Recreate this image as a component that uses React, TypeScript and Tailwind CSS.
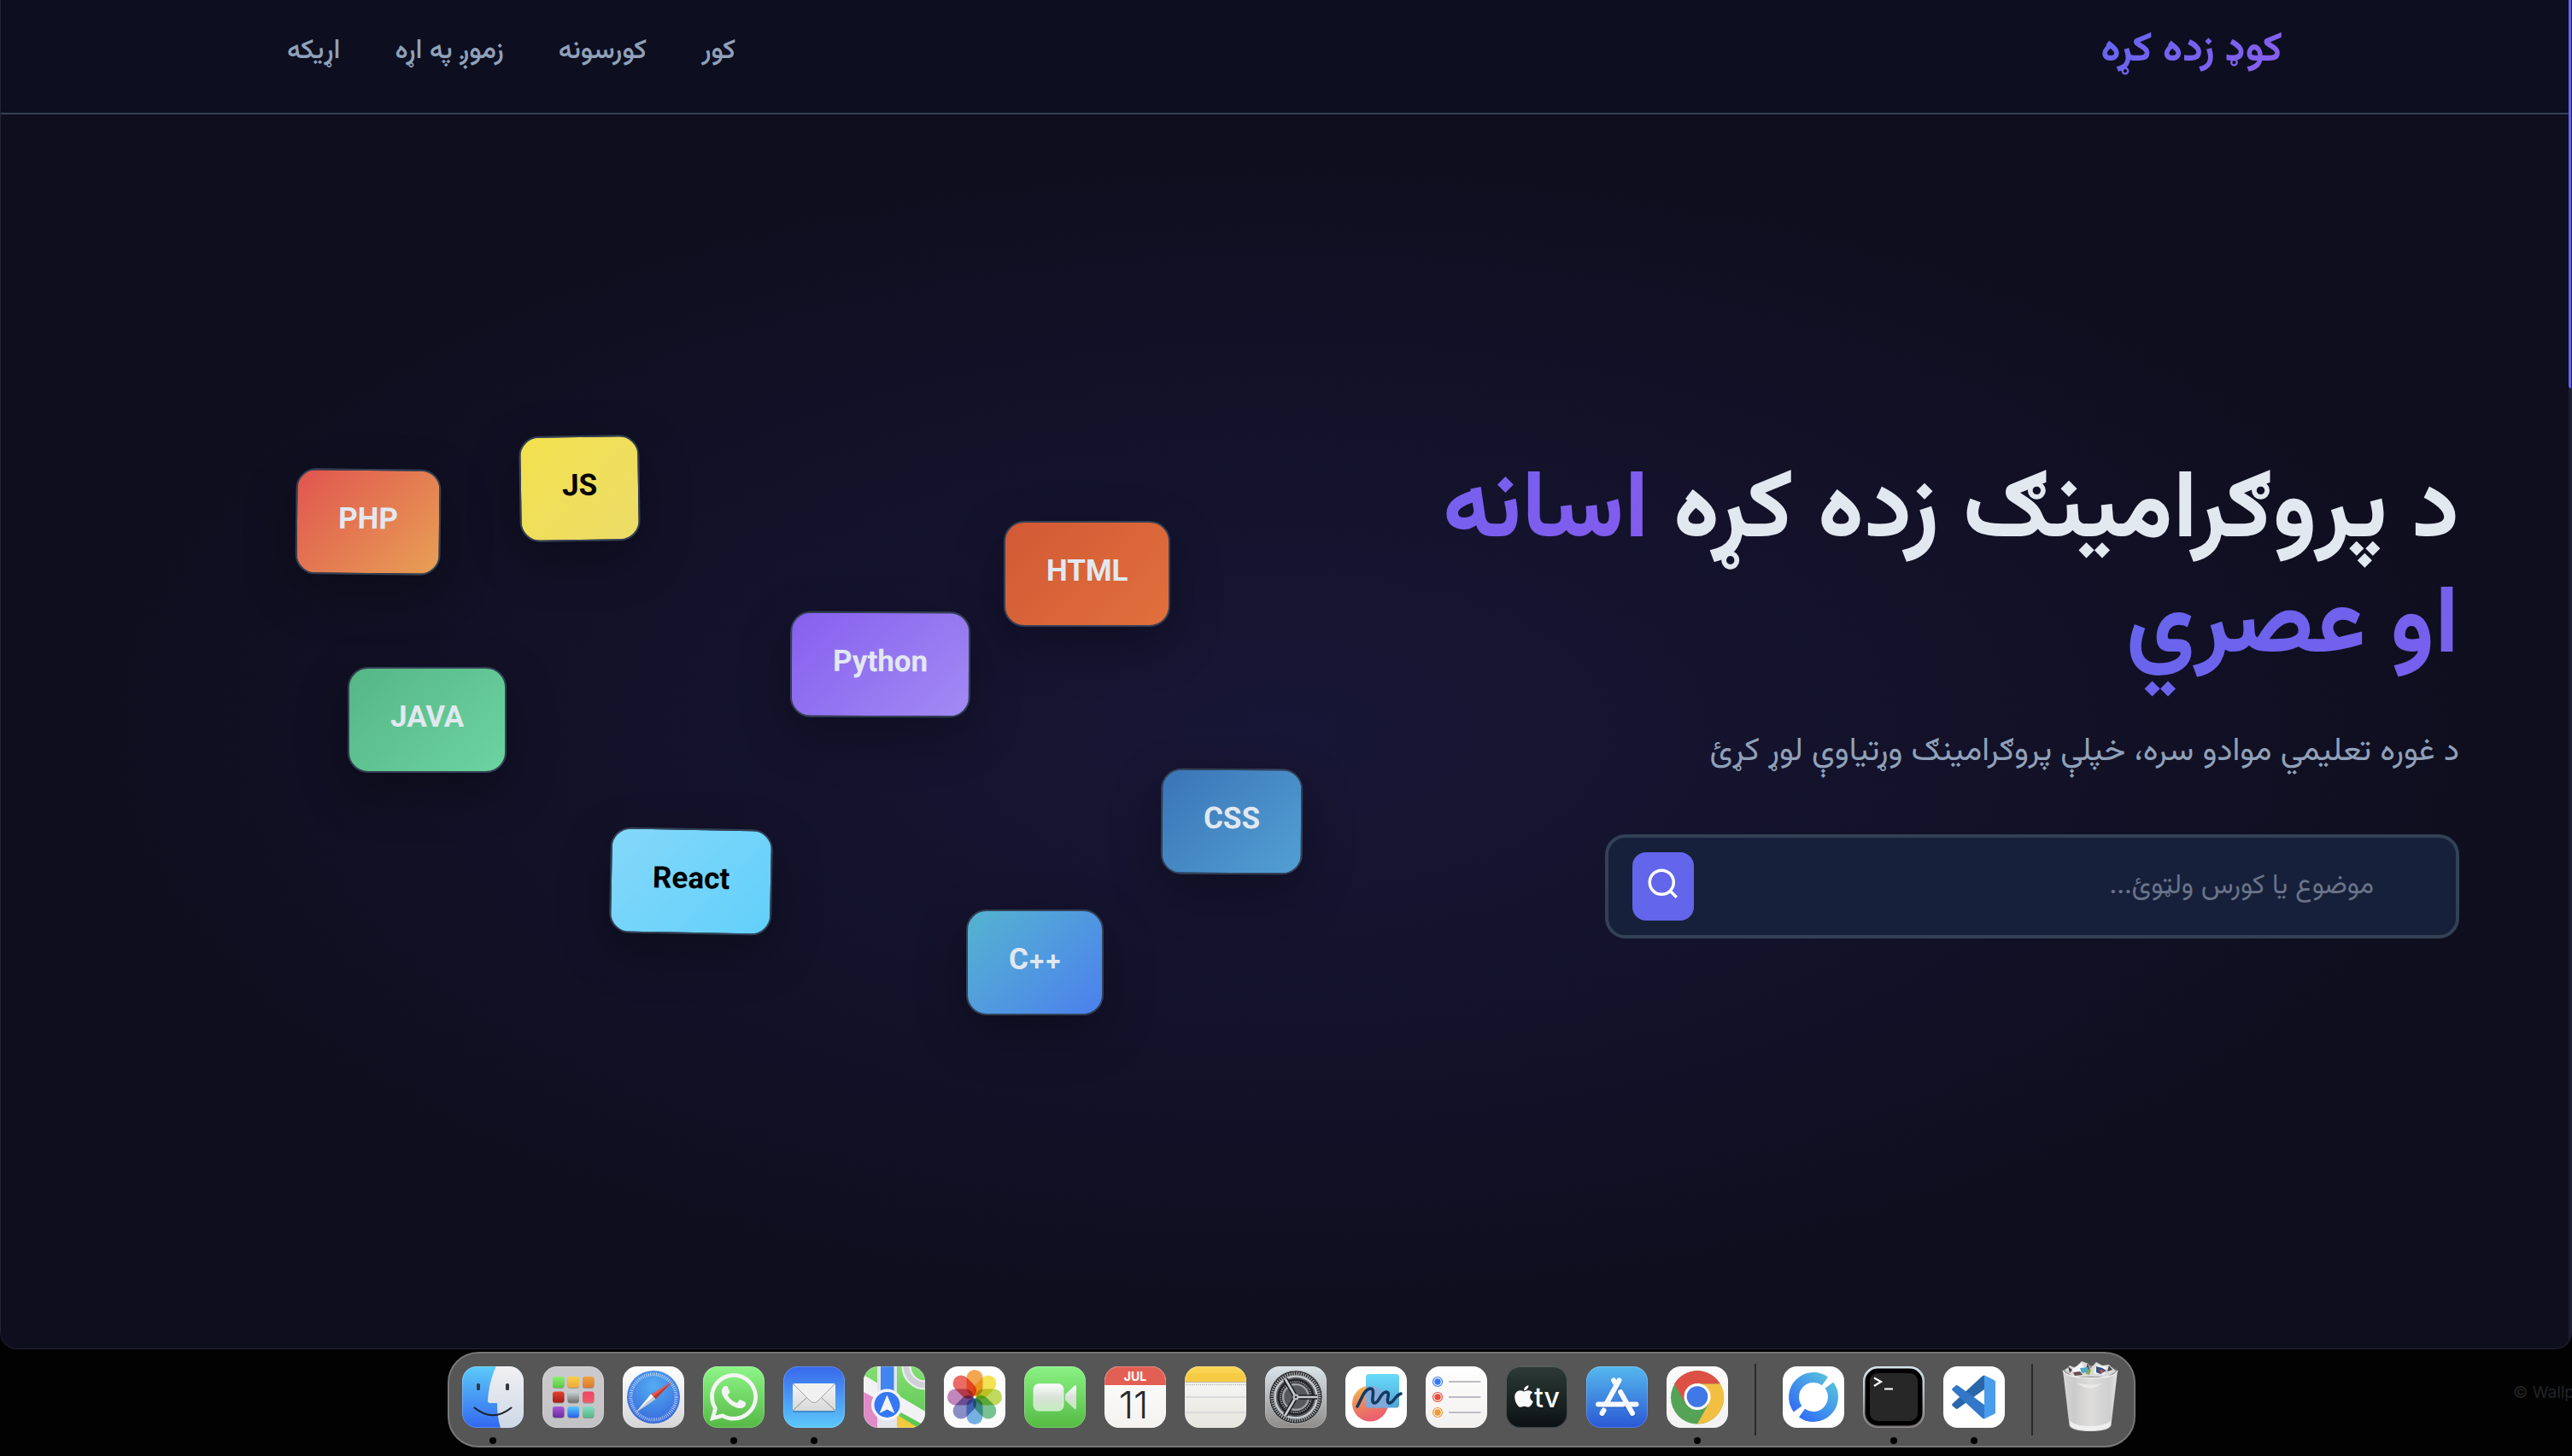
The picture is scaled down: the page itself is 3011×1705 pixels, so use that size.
import type { ReactNode } from "react";
import { Search } from "lucide-react";
import { FaApple, FaWhatsapp } from "react-icons/fa";

const navItems = ["کور", "کورسونه", "زموږ په اړه", "اړیکه"];

const techCards = [
  { name: "PHP", look: "left-[217px] top-[92px] rotate-[0.6deg] from-[#e0554f] to-[#e8a055] text-slate-200" },
  { name: "JS", look: "left-[479px] top-[53px] -rotate-[0.9deg] from-[#f3e14e] to-[#ecdc68] text-black" },
  { name: "JAVA", look: "left-[278px] top-[324px] from-[#56b685] to-[#6bd4a0] text-slate-200" },
  { name: "Python", look: "left-[796px] top-[259px] rotate-[0.2deg] from-[#8660ee] to-[#a28af4] text-slate-200" },
  { name: "HTML", look: "left-[1046px] top-[153px] from-[#d25935] to-[#e0703c] text-slate-200" },
  { name: "React", look: "left-[585px] top-[513px] rotate-[1.1deg] from-[#84d8fa] to-[#62d0fa] text-black" },
  { name: "CSS", look: "left-[1230px] top-[443px] rotate-[0.3deg] from-[#3a74b6] to-[#52a0d4] text-slate-200" },
  { name: "C++", look: "left-[1002px] top-[608px] from-[#54b4d0] to-[#4c80ee] text-slate-200" },
];

function Tile({ id, from, to, children }: { id: string; from: string; to: string; children?: ReactNode }) {
  return (
    <svg viewBox="0 0 72 72" className="size-[72px] shrink-0" aria-hidden="true">
      <defs>
        <linearGradient id={`${id}-bg`} x1="0" y1="0" x2="0" y2="1">
          <stop offset="0" stopColor={from} />
          <stop offset="1" stopColor={to} />
        </linearGradient>
        <clipPath id={`${id}-clip`}>
          <rect width="72" height="72" rx="17" />
        </clipPath>
      </defs>
      <g clipPath={`url(#${id}-clip)`}>
        <rect width="72" height="72" fill={`url(#${id}-bg)`} />
        {children}
      </g>
      <rect x="0.5" y="0.5" width="71" height="71" rx="16.5" fill="none" stroke="#fff" strokeOpacity="0.2" />
    </svg>
  );
}

function FinderIcon() {
  return (
    <Tile id="finder" from="#5ccbfa" to="#3268f0">
      <defs>
        <linearGradient id="finder-face" x1="0" y1="0" x2="0" y2="1">
          <stop offset="0" stopColor="#f1f0f2" />
          <stop offset="1" stopColor="#cdd8e6" />
        </linearGradient>
      </defs>
      <path d="M40 0C34 12 31 26 30 40Q30 43 33 43H41C41 53 42 63 45 72H72V0Z" fill="url(#finder-face)" />
      <rect x="17" y="20" width="4" height="8" rx="1.6" fill="#2c3c4c" />
      <rect x="51" y="20" width="4" height="8" rx="1.6" fill="#33383e" />
      <path d="M14.5 48.5Q36 66 57.5 48.5" fill="none" stroke="#1c222a" strokeWidth="2" strokeLinecap="round" />
    </Tile>
  );
}

function LaunchpadIcon() {
  const squares = [
    ["#8cf06c", "#58cc44"], ["#f8d048", "#f0a83c"], ["#eda43c", "#e07830"],
    ["#e04434", "#a81c14"], ["#ccd4d8", "#70706e"], ["#ee4868", "#ee5a68"],
    ["#a858d8", "#6c2ca0"], ["#54c8fc", "#2c60e8"], ["#84dcc8", "#58b880"],
  ];
  return (
    <Tile id="launchpad" from="#cbcbcd" to="#c3c3c5">
      {squares.map(([a, b], i) => (
        <g key={a}>
          <defs>
            <linearGradient id={`lp-${i}`} x1="0" y1="0" x2="0" y2="1">
              <stop offset="0" stopColor={a} />
              <stop offset="1" stopColor={b} />
            </linearGradient>
          </defs>
          <rect x={12 + (i % 3) * 17.5} y={12.5 + Math.floor(i / 3) * 17.5} width="13.5" height="13.5" rx="3" fill="#000" opacity="0.25" />
          <rect x={12 + (i % 3) * 17.5} y={12 + Math.floor(i / 3) * 17.5} width="13.5" height="13" rx="3" fill={`url(#lp-${i})`} />
        </g>
      ))}
    </Tile>
  );
}

function SafariIcon() {
  return (
    <Tile id="safari" from="#ffffff" to="#d6d6d6">
      <defs>
        <radialGradient id="safari-dial" cx="0.5" cy="0.3" r="0.7">
          <stop offset="0" stopColor="#53aef2" />
          <stop offset="1" stopColor="#3768dc" />
        </radialGradient>
      </defs>
      <circle cx="36" cy="36" r="31" fill="url(#safari-dial)" />
      <circle cx="36" cy="36" r="26.6" fill="none" stroke="#fff" strokeOpacity="0.75" strokeWidth="4" strokeDasharray="0.8 1.52" />
      <path d="M58.5 17.5 33.5 32.5 38.5 38Z" fill="#e8574c" />
      <path d="M58.5 17.5 36 35.5 38.5 38.5Z" fill="#c03a34" />
      <path d="M15 54.5 33 32.5 36 35.5Z" fill="#ffffff" />
      <path d="M15 54.5 36 35.5 38.5 38.5Z" fill="#c9cdd2" />
    </Tile>
  );
}

function WhatsAppIcon() {
  return (
    <Tile id="whatsapp" from="#8ef588" to="#55b945">
      <FaWhatsapp x="8" y="4" className="h-16 w-14" color="#f4f4f4" />
    </Tile>
  );
}

function MailIcon() {
  return (
    <Tile id="mail" from="#3868ec" to="#5cc8fa">
      <defs>
        <linearGradient id="mail-paper" x1="0" y1="0" x2="0" y2="1">
          <stop offset="0" stopColor="#f6f6f6" />
          <stop offset="1" stopColor="#d8d8d8" />
        </linearGradient>
      </defs>
      <rect x="11" y="22" width="50" height="32" rx="3" fill="#123" opacity="0.25" />
      <rect x="11" y="20" width="50" height="32" rx="2.5" fill="url(#mail-paper)" />
      <path d="M12 51 27 37M60 51 45 37" stroke="#8f8f8f" strokeWidth="1" />
      <path d="M12 21 31 40Q36 45 41 40L60 21" fill="#f1f1f1" stroke="#a2a2a2" strokeWidth="1" />
    </Tile>
  );
}

function MapsIcon() {
  return (
    <Tile id="maps" from="#86dd74" to="#58c650">
      <path d="M0 10V28L20 42V72H0Z" fill="#e08ac8" />
      <path d="M0 10 84 60V76L0 30Z" fill="#f2f2f5" />
      <path d="M38 56 64 72H38Z" fill="#f3ca3e" />
      <circle cx="72" cy="0" r="22" fill="none" stroke="#f0f0f2" strokeWidth="11" />
      <circle cx="72" cy="0" r="22" fill="none" stroke="#cfcfd8" strokeWidth="7" />
      <rect x="16" width="23" height="72" fill="#e4e4ec" />
      <rect x="20" width="15.5" height="40" fill="#3f86ee" />
      <circle cx="27.5" cy="45" r="18.5" fill="#f4f4f8" />
      <circle cx="27.5" cy="45" r="15" fill="#3478f4" />
      <path d="M27.5 34.5 35.5 54 27.5 50 19.5 54Z" fill="#f4f4f6" stroke="#f4f4f6" strokeLinejoin="round" />
    </Tile>
  );
}

function PhotosIcon() {
  const petals = ["#f29b38", "#f2e03c", "#b9d648", "#66bd84", "#64a8e2", "#7c80c2", "#bb78b4", "#e9584f"];
  return (
    <Tile id="photos" from="#ffffff" to="#fafafa">
      <g className="mix-blend-multiply">
        {petals.map((c, i) => (
          <rect key={c} className="mix-blend-multiply" x="26.5" y="4" width="19" height="31" rx="9.5" fill={c} fillOpacity="0.88" transform={`rotate(${i * 45} 36 36)`} />
        ))}
      </g>
      <circle cx="36" cy="36" r="1.5" fill="#fff" />
    </Tile>
  );
}

function FaceTimeIcon() {
  return (
    <Tile id="facetime" from="#8af284" to="#55bb44">
      <defs>
        <linearGradient id="ft-body" x1="0" y1="0" x2="0" y2="1">
          <stop offset="0" stopColor="#fdfdfd" />
          <stop offset="0.5" stopColor="#d9e2d8" />
          <stop offset="1" stopColor="#c4ecbc" />
        </linearGradient>
      </defs>
      <rect x="11" y="20.5" width="35" height="31.5" rx="6" fill="url(#ft-body)" stroke="#e6f4e4" strokeWidth="0.8" />
      <path d="M48 33 59 22.5Q61 21.5 61 24V48.5Q61 51 59 50L48 39.5Z" fill="url(#ft-body)" />
    </Tile>
  );
}

function CalendarIcon() {
  return (
    <Tile id="calendar" from="#ffffff" to="#f3f2ef">
      <rect width="72" height="22" fill="#e25f53" />
      <text x="36" y="17" textAnchor="middle" fill="#ffffff" className="font-[Inter] text-[14px] font-bold">JUL</text>
      <text x="34" y="61" textAnchor="middle" fill="#2a2a2a" className="font-[Inter] text-[44px] font-light">11</text>
    </Tile>
  );
}

function NotesIcon() {
  return (
    <Tile id="notes" from="#fbfbf9" to="#e6e5df">
      <rect width="72" height="18" fill="#f8cb44" />
      <rect width="72" height="8" fill="#fbd95e" opacity="0.6" />
      <path d="M0 18.5H72" stroke="#b9b3a4" strokeWidth="1.2" />
      <path d="M1 21.5H72" stroke="#b6b6b6" strokeWidth="1.4" strokeDasharray="1.2 1.2" />
      <path d="M0 36H72M0 54H72" stroke="#d4d4d6" strokeWidth="1.5" />
    </Tile>
  );
}

function SettingsIcon() {
  return (
    <Tile id="settings" from="#d9e4ea" to="#8f8c8a">
      <circle cx="36" cy="36" r="31" fill="#1c1c1e" />
      <circle cx="36" cy="36" r="31" fill="none" stroke="#b9bdc0" strokeWidth="0.8" />
      <circle cx="36" cy="36" r="27.5" fill="none" stroke="#a4a8ab" strokeWidth="4" strokeDasharray="1.5 1.2" />
      <circle cx="36" cy="36" r="24.5" fill="#5c5e60" stroke="#c4cace" strokeWidth="2.6" />
      <circle cx="36" cy="36" r="18.5" fill="none" stroke="#252527" strokeWidth="6" />
      <circle cx="36" cy="36" r="15" fill="#56585a" stroke="#9ea2a5" strokeWidth="2.4" />
      <circle cx="36" cy="36" r="18" fill="none" stroke="#909497" strokeWidth="2" strokeDasharray="1.3 1.2" />
      <path d="M36 36H61M36 36 23.5 14.5M36 36 23.5 57.5" stroke="#1b1b1d" strokeWidth="5.5" />
      <path d="M36 36H61M36 36 23.5 14.5M36 36 23.5 57.5" stroke="#c8ced2" strokeWidth="2.6" />
      <circle cx="36" cy="36" r="3.5" fill="#b8bec2" />
      <circle cx="36" cy="36" r="1.2" fill="#222" />
    </Tile>
  );
}

function FreeformIcon() {
  return (
    <Tile id="freeform" from="#ffffff" to="#ffffff">
      <defs>
        <linearGradient id="ff-circle" x1="0" y1="0" x2="0.3" y2="1">
          <stop offset="0" stopColor="#f2c14e" />
          <stop offset="0.5" stopColor="#ee8a5c" />
          <stop offset="1" stopColor="#ea6070" />
        </linearGradient>
        <linearGradient id="ff-square" x1="0" y1="0" x2="0" y2="1">
          <stop offset="0" stopColor="#68dcfa" />
          <stop offset="1" stopColor="#50a2d8" />
        </linearGradient>
      </defs>
      <circle cx="29" cy="43.5" r="21" fill="url(#ff-circle)" />
      <rect x="24" y="9" width="39" height="39.5" rx="3.5" fill="url(#ff-square)" />
      <path d="M24 23.5A21 21 0 0 1 49.5 48.5H27.5A3.5 3.5 0 0 1 24 45Z" fill="#8aa8da" opacity="0.85" />
      <path d="M14 47C19 38 22 27 29 26C37 26 28 42 34 43C40 43 41 30 48 30C54 31 46 41 51 43C56 44 58 34 65 32" fill="none" stroke="#163a60" strokeWidth="3.6" strokeLinecap="round" strokeLinejoin="round" />
    </Tile>
  );
}

function RemindersIcon() {
  return (
    <Tile id="reminders" from="#ffffff" to="#f2f0ee">
      {["#3478f6", "#e64c3c", "#ee9a34"].map((c, i) => (
        <g key={c}>
          <circle cx="14" cy={18 + i * 18} r="5.5" fill="none" stroke={c} strokeWidth="1.2" />
          <circle cx="14" cy={18 + i * 18} r="3.7" fill={c} />
          <path d={`M27 ${18 + i * 18}H64.5`} stroke="#bdbcc4" strokeWidth="1.8" />
        </g>
      ))}
    </Tile>
  );
}

function TvIcon() {
  return (
    <Tile id="tv" from="#2c3a36" to="#0c1114">
      <FaApple x="10" y="20" className="h-[30px] w-[22px]" color="#fafafa" />
      <text x="33" y="48" fill="#fafafa" className="font-[Inter] text-[32px] font-medium">tv</text>
    </Tile>
  );
}

function AppStoreIcon() {
  return (
    <Tile id="appstore" from="#56b8ee" to="#2a58d4">
      <g stroke="#1c3f9c" strokeOpacity="0.3" strokeWidth="6" strokeLinecap="round" transform="translate(0 1.5)">
        <path d="M14 44.5H58M38.5 16.5 24 43M18.5 55 20 52M32 16.5 54 55" />
      </g>
      <g stroke="#f6f9ff" strokeWidth="6" strokeLinecap="round">
        <path d="M32 16.5 35 21.5M14 44.5H43" />
        <path d="M38.5 16.5 24 43" />
        <path d="M18.5 55 20.5 51.5" />
        <path d="M40 30 54 55" />
        <path d="M51.5 44.5H58.5" />
      </g>
    </Tile>
  );
}

function ChromeIcon() {
  return (
    <Tile id="chrome" from="#fbfbfb" to="#f2f2f2">
      <circle cx="36" cy="36.5" r="31" fill="#54a357" />
      <path d="M9.2 20.5A31 31 0 0 1 62.8 20.5H36L22.5 44Z" fill="#dc5144" />
      <path d="M62.8 20.5A31 31 0 0 1 36 67.5L49.5 43.5 36 20.5Z" fill="#f3bf42" />
      <circle cx="36" cy="35.5" r="15.5" fill="#ffffff" />
      <circle cx="36" cy="35.5" r="12.3" fill="#4078e8" />
    </Tile>
  );
}

function RingIcon() {
  return (
    <Tile id="ring" from="#ffffff" to="#ffffff">
      <defs>
        <linearGradient id="ring-a" gradientUnits="userSpaceOnUse" x1="56" y1="14" x2="16" y2="58">
          <stop offset="0" stopColor="#56c0dc" />
          <stop offset="1" stopColor="#306cf8" />
        </linearGradient>
      </defs>
      <path d="M17.6 49.8A23 23 0 0 1 49.500 17.400" fill="none" stroke="url(#ring-a)" strokeWidth="12" />
      <path d="M54.400 22.200A23 23 0 0 1 22.500 54.600" fill="none" stroke="url(#ring-a)" strokeWidth="12" />
    </Tile>
  );
}

function TerminalIcon() {
  return (
    <Tile id="terminal" from="#d2e6ec" to="#756e70">
      <rect x="2.5" y="2.5" width="67" height="67" rx="15" fill="#000" />
      <rect x="8" y="8" width="56" height="56" rx="9" fill="#272727" />
      <path d="M13 13.5 21 18 13 23M25 26.5H35" fill="none" stroke="#fff" strokeWidth="2.2" />
    </Tile>
  );
}

function CodeIcon() {
  return (
    <Tile id="code" from="#ffffff" to="#ffffff">
      <path d="M48 10.5V27L17 49.5Q15.5 50.5 14 49L10.5 46Q9.5 44.5 11 43.5L45 12Q46.5 10.5 48 10.5Z" fill="#2a66aa" />
      <path d="M48 61.5V45L17 22.5Q15.5 21.5 14 23L10.5 26Q9.5 27.5 11 28.5L45 60Q46.5 61.5 48 61.5Z" fill="#3378c8" />
      <path d="M48 10.5 59.5 16Q61 17 61 18.5V53.5Q61 55 59.5 56L48 61.5Z" fill="#4a9cec" />
    </Tile>
  );
}

function TrashIcon() {
  return (
    <svg viewBox="0 0 72 88" className="-mb-[5px] h-[88px] w-[72px] shrink-0" aria-hidden="true">
      <defs>
        <linearGradient id="bin" x1="0" y1="0" x2="1" y2="0">
          <stop offset="0" stopColor="#d6d6d6" />
          <stop offset="0.2" stopColor="#cbcbcb" />
          <stop offset="0.5" stopColor="#dedddc" />
          <stop offset="0.85" stopColor="#cfcfcf" />
          <stop offset="1" stopColor="#e4e4e4" />
        </linearGradient>
      </defs>
      <ellipse cx="36" cy="17" rx="32" ry="7" fill="#8c8c8c" />
      <path d="M6 16 12 10 18 13 26 5 34 8 36 14 43 6 50 10 58 9 66 17 56 23H16Z" fill="#d9d9d9" />
      <path d="M14 15 26 7 30 15 20 21ZM40 19 44 9 56 12 52 21Z" fill="#f6f6f6" />
      <path d="M10 11 15 15 12 19ZM33 7 36 16 31 14ZM58 10 62 15 56 17Z" fill="#4a4a4a" />
      <path d="M24 13 34 12 32 18 26 19Z" fill="#50a8c8" />
      <path d="M33 14 37 15 35 21 31 20Z" fill="#88a850" />
      <path d="M43 11 50 13 55 16 48 20 43 18Z" fill="#3c4c80" />
      <path d="M47 15 52 16 49 20Z" fill="#c05c3c" />
      <path d="M16 18 24 17 27 21 18 22Z" fill="#6b4c4c" />
      <path d="M4 16Q6 24 36 24.5Q66 24 68 16L60.5 80Q58 87 36 87Q14 87 11.5 80Z" fill="url(#bin)" />
      <path d="M12 75Q20 81 36 81T60 75L59.5 80Q57 86 36 86T12.5 80Z" fill="#f5f5f5" opacity="0.8" />
      <path d="M20 30Q36 44 52 29Q42 36 20 30Z" fill="#efefef" opacity="0.7" />
      <path d="M4 16Q7 24 36 24.5T68 16" fill="none" stroke="#f2f2f2" strokeWidth="1.2" />
    </svg>
  );
}

function DockItem({ label, running, children }: { label: string; running?: boolean; children: ReactNode }) {
  return (
    <button type="button" aria-label={label} className="relative flex size-[72px] items-end justify-center">
      {children}
      {running && <span className="absolute top-[83px] size-2 rounded-full bg-black" />}
    </button>
  );
}

function DockDivider() {
  return <span className="mx-[9px] -mt-[3px] -mb-[9px] h-[84px] w-[2px] bg-[#2a2a2a]" />;
}

function Dock() {
  return (
    <nav aria-label="Dock" dir="ltr" className="flex items-start gap-[22px] rounded-[36px] border-2 border-[#777777] bg-[#565657] px-[15px] pt-[15px] pb-[21px]">
      <DockItem label="Finder" running><FinderIcon /></DockItem>
      <DockItem label="Launchpad"><LaunchpadIcon /></DockItem>
      <DockItem label="Safari"><SafariIcon /></DockItem>
      <DockItem label="WhatsApp" running><WhatsAppIcon /></DockItem>
      <DockItem label="Mail" running><MailIcon /></DockItem>
      <DockItem label="Maps"><MapsIcon /></DockItem>
      <DockItem label="Photos"><PhotosIcon /></DockItem>
      <DockItem label="FaceTime"><FaceTimeIcon /></DockItem>
      <DockItem label="Calendar"><CalendarIcon /></DockItem>
      <DockItem label="Notes"><NotesIcon /></DockItem>
      <DockItem label="System Settings"><SettingsIcon /></DockItem>
      <DockItem label="Freeform"><FreeformIcon /></DockItem>
      <DockItem label="Reminders"><RemindersIcon /></DockItem>
      <DockItem label="TV"><TvIcon /></DockItem>
      <DockItem label="App Store"><AppStoreIcon /></DockItem>
      <DockItem label="Chrome" running><ChromeIcon /></DockItem>
      <DockDivider />
      <DockItem label="API client"><RingIcon /></DockItem>
      <DockItem label="Terminal" running><TerminalIcon /></DockItem>
      <DockItem label="Visual Studio Code" running><CodeIcon /></DockItem>
      <DockDivider />
      <DockItem label="Trash"><TrashIcon /></DockItem>
    </nav>
  );
}

export default function App() {
  return (
    <div className="flex h-screen flex-col overflow-hidden bg-[#020203] font-[Vazirmatn,Roboto,'DejaVu_Sans',sans-serif]">
      <div dir="rtl" className="relative flex min-h-0 flex-1 flex-col overflow-hidden rounded-b-[20px] border border-t-0 border-[#232338] bg-[#0e0e1e] pr-[3px]">
        <header className="border-b-2 border-[#334155] bg-[#0d0e20]">
          <div className="mx-auto flex max-w-[2400px] items-center justify-between px-8 pt-[22px] pb-[34px]">
            <a href="#home" className="bg-linear-135/srgb from-[#6366f1] to-[#8a5eec] bg-clip-text text-[48px] leading-[76px] font-bold text-transparent">
              کوډ زده کړه
            </a>
            <nav className="flex gap-16">
              {navItems.map((item) => (
                <a key={item} href="#home" className="text-[32px] font-medium text-slate-400">{item}</a>
              ))}
            </nav>
          </div>
        </header>

        <main className="grid flex-1 grid-cols-2 items-center gap-32 bg-[radial-gradient(ellipse_at_50%_50%,#181636_0%,#0e0e1e_70%)] px-32">
          <section className="flex flex-col pb-20">
            <h1 className="mb-12 text-[112px] leading-[1.2] font-bold text-slate-200">
              د پروګرامینګ زده کړه{" "}
              <span className="bg-linear-135/srgb from-[#6366ec] to-[#855bee] bg-clip-text text-transparent">
                اسانه
                <br />
                او عصري
              </span>
            </h1>
            <p className="mb-[66px] text-[38px] leading-[60px] text-slate-400">
              د غوره تعلیمي موادو سره، خپلې پروګرامینګ وړتیاوې لوړ کړئ
            </p>
            <form className="flex w-full max-w-[1000px] items-center justify-between rounded-3xl border-4 border-[#334155] bg-[#17203a] py-[17px] ps-24 pe-7">
              <input
                type="search"
                aria-label="لټون"
                placeholder="موضوع یا کورس ولټوئ..."
                className="min-w-0 flex-1 bg-transparent text-[32px] leading-[60px] text-slate-200 outline-none placeholder:text-[#697389]"
              />
              <button type="submit" aria-label="لټون" className="flex h-20 w-[72px] items-start justify-center rounded-2xl bg-[#6366ea] pt-4 text-white">
                <Search className="size-[42px]" strokeWidth={2} strokeLinecap="butt" />
              </button>
            </form>
          </section>

          <section dir="ltr" aria-label="ژبې" className="relative h-[800px]">
            {techCards.map((card) => (
              <div
                key={card.name}
                className={`absolute rounded-3xl border-2 border-[#334155] bg-linear-135/srgb px-12 py-8 text-[35px] leading-[56px] font-bold whitespace-nowrap shadow-[0_20px_60px_rgba(0,0,0,0.3)] ${card.look}`}
              >
                {card.name}
              </div>
            ))}
          </section>
        </main>

        <div aria-hidden="true" className="absolute top-0 -right-px h-full w-1 bg-[#1c1d30]">
          <div className="h-[455px] rounded-bl-full bg-[#6366ea]" />
        </div>
      </div>

      <footer className="relative flex justify-center overflow-hidden pt-[3px] pb-[10px] pl-[13px]">
        <Dock />
        <span className="absolute top-[37px] left-[2942px] font-[Inter] text-[19px] whitespace-nowrap text-[#232323]">© Wallp</span>
      </footer>
    </div>
  );
}
